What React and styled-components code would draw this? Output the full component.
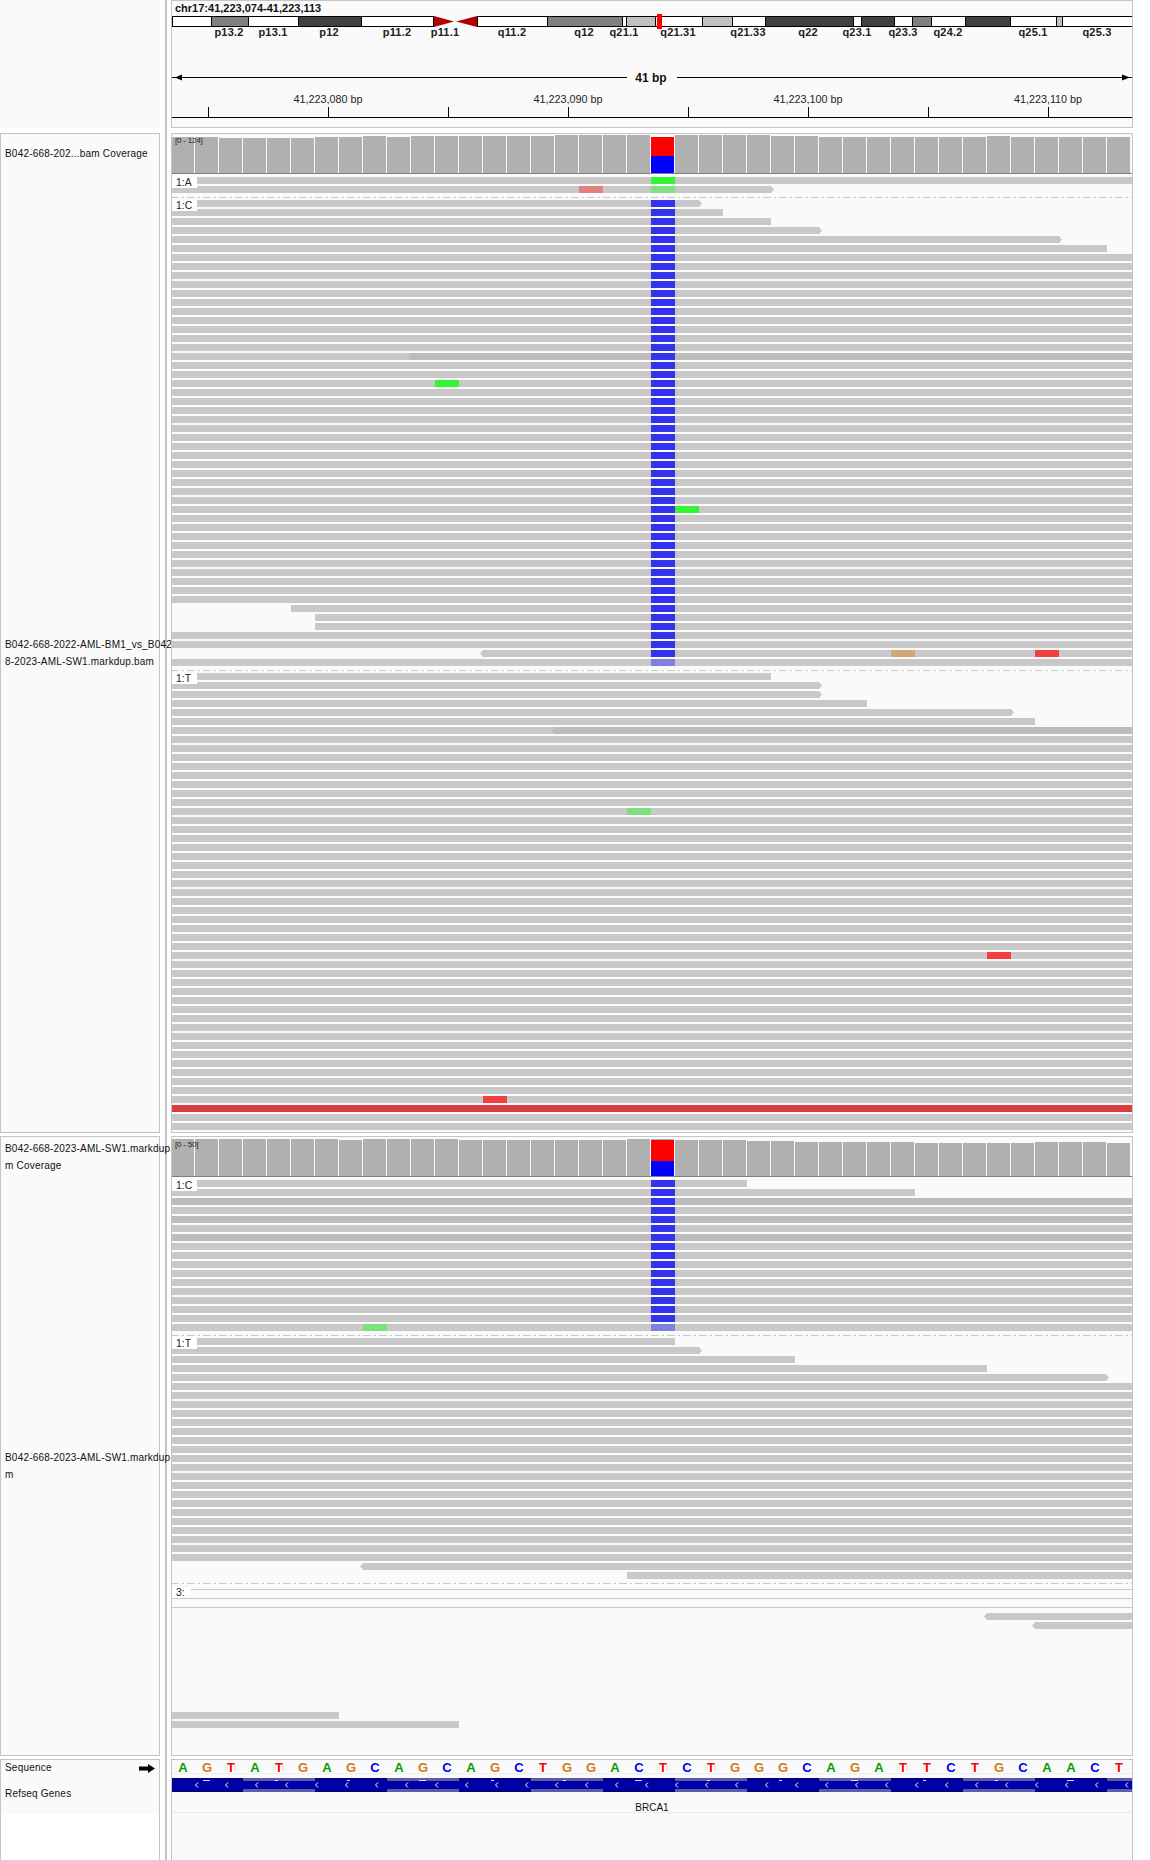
import styled, { createGlobalStyle } from 'styled-components';

const GlobalStyle = createGlobalStyle`
  html, body { margin: 0; padding: 0; background: #fff; }
  body { font-family: "Liberation Sans", Arial, sans-serif; color: #111; }
`;

const READ = '#c8c8c8';
const DARK_READ = '#bcbcbc';
const BLUE = '#3333ee';
const PALE_BLUE = '#8080e0';
const GREEN = '#33f533';
const PALE_GREEN = '#80e080';
const PINK = '#e08080';
const TAN = '#d0a878';
const RED = '#f04040';

const col = (i) => 171 + i * 24;
const RIGHT = 1132;

const Page = styled.div`
  display: grid;
  grid-template-columns: 160px 5px 2px 4px 962px;
  grid-template-rows: 130px 1000px 620px 101px;
  row-gap: 3px;
  width: 1150px;
  height: 1860px;
  overflow: hidden;
  background: #fff;
`;

const Divider = styled.div`
  grid-column: 3;
  grid-row: 1 / -1;
  background: #c4c4c4;
`;

const NamePanel = styled.div`
  grid-column: 1;
  position: relative;
  z-index: 1;
  display: flex;
  flex-direction: column;
  box-sizing: border-box;
  background: ${(p) => p.$bg || '#fafafa'};
  border: 1px solid #c4c4c4;
  border-bottom: ${(p) => (p.$open ? 'none' : '1px solid #c4c4c4')};
`;

const BlankName = styled.div`
  grid-column: 1;
  height: 128px;
  background: #fafafa;
`;

const NameCell = styled.div`
  display: flex;
  flex-direction: column;
  justify-content: center;
  height: ${(p) => p.$h}px;
  padding-left: 4px;
  font-size: 10px;
  letter-spacing: 0.2px;
  line-height: 16.5px;
  white-space: nowrap;
  color: #111;
`;

const SeqName = styled(NameCell)`
  flex-direction: row;
  justify-content: space-between;
  align-items: center;
  height: 16px;
  margin-bottom: -2px;
  padding-right: 4px;
  background: #fafafa;
`;

const GeneName = styled(NameCell)`
  background: #fafafa;
`;

const DataPanel = styled.div`
  grid-column: 5;
  position: relative;
  z-index: 2;
  box-sizing: border-box;
  height: ${(p) => p.$h}px;
  background: #fafafa;
  border: 1px solid #c4c4c4;
  border-bottom: ${(p) => (p.$open ? 'none' : '1px solid #c4c4c4')};
  overflow: hidden;
`;

const Title = styled.div`
  height: 11px;
  padding-left: 3px;
  font-size: 11px;
  font-weight: bold;
  line-height: 14px;
  white-space: nowrap;
`;

const Canvas = styled.svg`
  display: block;
  font-family: "Liberation Sans", Arial, sans-serif;
  rect, line { shape-rendering: crispEdges; }
`;

const BandLabel = styled.text`
  font-size: 11px;
  font-weight: bold;
  letter-spacing: 0.2px;
  text-anchor: middle;
  fill: #222;
`;

const SpanLabel = styled.text`
  font-size: 12px;
  font-weight: bold;
  text-anchor: middle;
  fill: #111;
`;

const TickLabel = styled.text`
  font-size: 10.8px;
  text-anchor: middle;
  fill: #222;
`;

const GroupLabel = styled.div`
  position: absolute;
  left: 0;
  top: ${(p) => p.$top}px;
  box-sizing: border-box;
  width: ${(p) => p.$w}px;
  height: 11px;
  padding-left: 4px;
  background: #fff;
  font-size: 10.4px;
  line-height: 12px;
  color: #222;
`;

const RangeLabel = styled.div`
  position: absolute;
  left: 3px;
  top: ${(p) => p.$top}px;
  font-size: 8px;
  line-height: 10px;
  letter-spacing: -0.2px;
  color: #222;
`;

const SequenceRow = styled.div`
  display: flex;
  height: 13px;
  margin-left: -1px;
  border-bottom: 1px solid #ececec;
`;

const Base = styled.span`
  flex: 0 0 24px;
  text-align: center;
  font-size: 13px;
  font-weight: bold;
  line-height: 16px;
  color: ${(p) => p.$color};
`;

const GeneLabel = styled.div`
  height: 20px;
  box-sizing: border-box;
  border-bottom: 1px solid #e8e8e8;
  font-size: 10px;
  line-height: 29px;
  text-align: center;
  color: #111;
`;

const BANDS = [
  [211.5, 248.5, '#808080'], [298.5, 361.5, '#404040'], [547.5, 622.5, '#808080'],
  [626.5, 655.5, '#c0c0c0'], [702.5, 732.5, '#c0c0c0'], [765.5, 853.5, '#404040'],
  [861.5, 894.5, '#404040'], [912.5, 931.5, '#808080'], [965.5, 1010.5, '#404040'],
  [1056.5, 1062.5, '#c0c0c0'],
];

const BAND_LABELS = [
  ['p13.2', 229], ['p13.1', 273], ['p12', 329], ['p11.2', 397], ['p11.1', 445],
  ['q11.2', 512], ['q12', 584], ['q21.1', 624], ['q21.31', 678], ['q21.33', 748],
  ['q22', 808], ['q23.1', 857], ['q23.3', 903], ['q24.2', 948], ['q25.1', 1033], ['q25.3', 1097],
];

const Ideogram = () => (
  <g>
    <rect x="172.5" y="16.5" width="261" height="10" fill="#fff" stroke="#000" />
    <rect x="477.5" y="16.5" width="660" height="10" fill="#fff" stroke="#000" />
    {BANDS.map(([a, b, c]) => (
      <rect key={a} x={a} y="16.5" width={b - a} height="10" fill={c} stroke="#000" />
    ))}
    <polygon points="434,16 454,21.5 434,27" fill="#b00000" />
    <polygon points="477,16 456,21.5 477,27" fill="#b00000" />
    <rect x="657" y="14" width="5" height="15" fill="#ff0000" />
    {BAND_LABELS.map(([t, x]) => (
      <BandLabel key={t} x={x} y="36">{t}</BandLabel>
    ))}
  </g>
);

const Ruler = () => (
  <g>
    <line x1="172" x2="627" y1="77.5" y2="77.5" stroke="#000" />
    <line x1="677" x2="1132" y1="77.5" y2="77.5" stroke="#000" />
    <polygon points="175,77.5 182,74.5 182,80.5" fill="#000" />
    <polygon points="1130,77.5 1122,74.5 1122,80.5" fill="#000" />
    <SpanLabel x="651" y="82">41 bp</SpanLabel>
    {[208, 328, 448, 568, 688, 808, 928, 1048].map((x) => (
      <line key={x} x1={x + 0.5} x2={x + 0.5} y1="107" y2="117" stroke="#000" />
    ))}
    {[[328, '41,223,080 bp'], [568, '41,223,090 bp'], [808, '41,223,100 bp'], [1048, '41,223,110 bp']].map(([x, t]) => (
      <TickLabel key={x} x={x} y="102.5">{t}</TickLabel>
    ))}
    <line x1="172" x2="1132" y1="117.5" y2="117.5" stroke="#000" />
  </g>
);

// one bar per base, tops are page y values
const Coverage = ({ tops, bottom, split, altTop }) => (
  <g>
    {tops.map((top, i) => (
      <rect key={i} x={col(i)} y={top} width="23" height={bottom - top} fill={i === 20 ? '#ff0000' : '#b0b0b0'} />
    ))}
    {altTop && <rect x={col(20)} y={altTop} width="23" height="1" fill="#b0b0b0" />}
    <rect x={col(20)} y={split} width="23" height={bottom - split} fill="#0000ff" />
    <rect x="172" y={bottom} width="960" height="1" fill="#808080" />
  </g>
);

const Read = ({ y, start = 171, end = RIGHT, dir, fill = READ, overlap, marks = [] }) => (
  <g>
    <rect x={start} y={y} width={end - start} height="7" fill={fill} />
    {dir === 'r' && <polygon points={`${end},${y} ${end + 3},${y + 3.5} ${end},${y + 7}`} fill={fill} />}
    {dir === 'l' && <polygon points={`${start},${y} ${start - 3},${y + 3.5} ${start},${y + 7}`} fill={fill} />}
    {overlap && (
      <g>
        <rect x={overlap} y={y} width={RIGHT - overlap} height="7" fill={DARK_READ} />
        <polygon points={`${overlap},${y} ${overlap - 3},${y + 3.5} ${overlap},${y + 7}`} fill={DARK_READ} />
      </g>
    )}
    {marks.map(([c, color]) => (
      <rect key={c} x={col(c)} y={y} width="24" height="7" fill={color} />
    ))}
  </g>
);

// a group of stacked reads at a 9px pitch, with per-row exceptions
const Group = ({ y, count, rows = {}, column, lastColumn }) => (
  <g>
    {Array.from({ length: count }, (_, k) => {
      const row = rows[k] || {};
      const marks = [...(row.marks || [])];
      if (column) marks.push([20, k === count - 1 ? lastColumn : column]);
      return <Read key={k} y={y + k * 9} {...row} marks={marks} />;
    })}
  </g>
);

const DashLine = ({ y }) => (
  <line x1="171" x2={RIGHT} y1={y + 0.5} y2={y + 0.5} stroke={READ} strokeDasharray="8 3 2 3" />
);

const TOPS_A = [
  137, 137, 138, 138, 138, 138, 137, 137, 136, 137, 136, 136, 136, 136, 136, 136, 135, 135, 135, 135,
  137, 135, 135, 135, 135, 136, 136, 137, 137, 137, 137, 137, 137, 137, 136, 137, 137, 137, 137, 137,
];

const TOPS_B = [
  1139, 1139, 1139, 1139, 1139, 1139, 1139, 1140, 1139, 1139, 1139, 1139, 1140, 1140, 1140, 1140, 1140, 1140, 1140, 1139,
  1140, 1140, 1140, 1140, 1141, 1141, 1142, 1142, 1142, 1142, 1142, 1143, 1143, 1143, 1143, 1143, 1142, 1142, 1142, 1143,
];

const SEQUENCE = 'AGTATGAGCAGCAGCTGGACTCTGGGCAGATTCTGCAACT';
const BASE_COLORS = { A: '#00a000', G: '#d17a1c', C: '#0000ff', T: '#ff0000' };

const Gene = () => (
  <g>
    {Array.from({ length: 14 }, (_, k) => (
      <rect key={k} x={col(k * 3)} y="1778" width="72" height="14" fill={k % 2 ? '#5c5ca8' : '#000088'} />
    ))}
    <rect x="172" y="1781" width="960" height="8" fill="#0000aa" />
    {Array.from({ length: 14 }, (_, k) => (
      <rect key={k} x={col(k * 3) + 32} y="1780" width={k % 3 === 0 ? 7 : 3} height="1" fill="#fff" opacity="0.85" />
    ))}
    {Array.from({ length: 32 }, (_, k) => {
      const x = 195.5 + k * 30;
      return <polyline key={k} points={`${x + 2.5},1782.5 ${x},1785 ${x + 2.5},1787.5`} fill="none" stroke="#fff" />;
    })}
  </g>
);

const App = () => (
  <>
    <GlobalStyle />
    <Page>
      <Divider />

      <BlankName />
      <DataPanel $h={128}>
        <Title>chr17:41,223,074-41,223,113</Title>
        <Canvas width="960" height="115" viewBox="172 12 960 115">
          <Ideogram />
          <Ruler />
        </Canvas>
      </DataPanel>

      <NamePanel>
        <NameCell $h={41}>B042-668-202...bam Coverage</NameCell>
        <NameCell $h={957}>
          <span>B042-668-2022-AML-BM1_vs_B042-66</span>
          <span>8-2023-AML-SW1.markdup.bam</span>
        </NameCell>
      </NamePanel>
      <DataPanel $h={1000}>
        <Canvas width="960" height="998" viewBox="172 134 960 998">
          <Coverage tops={TOPS_A} bottom={173} split={156} />
          <Group y={177} count={2} rows={{
            0: { marks: [[20, GREEN]] },
            1: { end: 771, dir: 'r', marks: [[17, PINK], [20, PALE_GREEN]] },
          }} />
          <DashLine y={197} />
          <Group y={200} count={52} column={BLUE} lastColumn={PALE_BLUE} rows={{
            0: { end: 699, dir: 'r' },
            1: { end: 723 },
            2: { end: 771 },
            3: { end: 819, dir: 'r' },
            4: { end: 1059, dir: 'r' },
            5: { end: 1107 },
            17: { overlap: 411 },
            20: { marks: [[11, GREEN]] },
            34: { marks: [[21, GREEN]] },
            45: { start: 291 },
            46: { start: 315 },
            47: { start: 315 },
            50: { start: 483, dir: 'l', marks: [[30, TAN], [36, RED]] },
          }} />
          <DashLine y={670} />
          <Group y={673} count={51} rows={{
            0: { end: 771 },
            1: { end: 819, dir: 'r' },
            2: { end: 819, dir: 'r' },
            3: { end: 867 },
            4: { end: 1011, dir: 'r' },
            5: { end: 1035 },
            6: { overlap: 555 },
            15: { marks: [[19, PALE_GREEN]] },
            31: { marks: [[34, RED]] },
            47: { marks: [[13, RED]] },
            48: { fill: '#d84040' },
          }} />
        </Canvas>
        <RangeLabel $top={2}>[0 - 124]</RangeLabel>
        <GroupLabel $top={43} $w={25}>1:A</GroupLabel>
        <GroupLabel $top={66} $w={25}>1:C</GroupLabel>
        <GroupLabel $top={539} $w={25}>1:T</GroupLabel>
      </DataPanel>

      <NamePanel>
        <NameCell $h={41}>
          <span>B042-668-2023-AML-SW1.markdup.ba</span>
          <span>m Coverage</span>
        </NameCell>
        <NameCell $h={577}>
          <span>B042-668-2023-AML-SW1.markdup.ba</span>
          <span>m</span>
        </NameCell>
      </NamePanel>
      <DataPanel $h={620}>
        <Canvas width="960" height="618" viewBox="172 1137 960 618">
          <Coverage tops={TOPS_B} bottom={1176} split={1161} altTop={1139} />
          <Group y={1180} count={17} column={BLUE} lastColumn={PALE_BLUE} rows={{
            0: { end: 747 },
            1: { end: 915 },
            2: { fill: DARK_READ },
            4: { fill: DARK_READ },
            6: { fill: DARK_READ },
            16: { marks: [[8, PALE_GREEN]] },
          }} />
          <DashLine y={1335} />
          <Group y={1338} count={27} rows={{
            0: { end: 675 },
            1: { end: 699, dir: 'r' },
            2: { end: 795 },
            3: { end: 987 },
            4: { end: 1106, dir: 'r' },
            25: { start: 363, dir: 'l' },
            26: { start: 627 },
          }} />
          <DashLine y={1583} />
          <rect x="190" y="1589" width="942" height="1" fill={READ} />
          <rect x="172" y="1598" width="960" height="1" fill={READ} />
          <rect x="172" y="1607" width="960" height="1" fill={READ} />
          <Read y={1613} start={987} dir="l" />
          <Read y={1622} start={1035} dir="l" />
          <Read y={1712} end={339} />
          <Read y={1721} end={459} />
        </Canvas>
        <RangeLabel $top={3}>[0 - 50]</RangeLabel>
        <GroupLabel $top={43} $w={25}>1:C</GroupLabel>
        <GroupLabel $top={201} $w={25}>1:T</GroupLabel>
        <GroupLabel $top={450} $w={19}>3:</GroupLabel>
      </DataPanel>

      <NamePanel $bg="#fff" $open>
        <SeqName $h={14}>
          Sequence
          <svg width="16" height="9" viewBox="0 0 16 9">
            <polygon points="0,2.5 9,2.5 9,0 16,4.5 9,9 9,6.5 0,6.5" fill="#000" />
          </svg>
        </SeqName>
        <GeneName $h={40}>Refseq Genes</GeneName>
      </NamePanel>
      <DataPanel $h={101} $open>
        <SequenceRow>
          {SEQUENCE.slice(0, 40).split('').map((b, i) => (
            <Base key={i} $color={BASE_COLORS[b]}>{b}</Base>
          ))}
        </SequenceRow>
        <Canvas width="960" height="19" viewBox="172 1774 960 19">
          <Gene />
        </Canvas>
        <GeneLabel>BRCA1</GeneLabel>
      </DataPanel>
    </Page>
  </>
);

export default App;
